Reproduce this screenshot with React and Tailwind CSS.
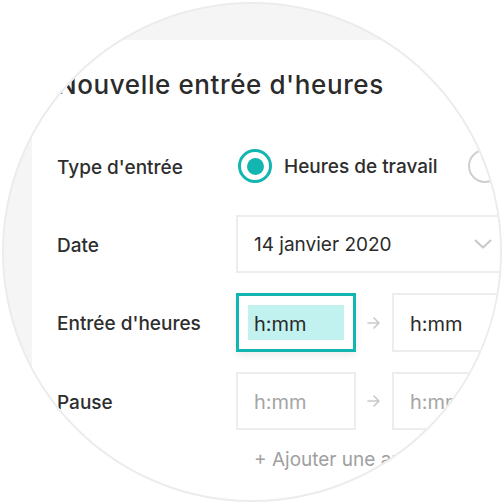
const Arrow = () => (
  <svg width="14" height="12" viewBox="0 0 14 12" className="mx-auto">
    <path d="M1 6h11M7 1l5 5-5 5" fill="none" stroke="#c9c9c9" strokeWidth="1.6" strokeLinecap="round" strokeLinejoin="round" />
  </svg>
);

const TimeBox = ({ value, muted, focused }) => {
  if (focused) {
    return (
      <div className="w-[120px] h-[59px] border-[3px] border-[#13b5b1] bg-white p-[9px] shadow-[0_3px_8px_rgba(0,0,0,0.08)] shrink-0">
        <div className="h-full bg-[#c2f2ef] pl-[6px] pt-[2px] flex items-center text-[20px] text-[#2b2b2b]">
          {value}
        </div>
      </div>
    );
  }
  return (
    <div
      className={
        "w-[120px] h-full border-2 border-[#ededed] bg-white pl-[16px] pt-[2px] flex items-center text-[20px] shrink-0 " +
        (muted ? "text-[#a5a5a5]" : "text-[#2b2b2b]")
      }
    >
      {value}
    </div>
  );
};

export default function App() {
  return (
    <div
      className="w-[504px] h-[504px] bg-white flex items-center justify-center"
      style={{ fontFamily: "Inter, 'Noto Sans', sans-serif" }}
    >
      <div className="w-[500px] h-[500px] rounded-full overflow-hidden border-2 border-[#ececec] bg-[#f5f5f5] shrink-0">
        <div className="ml-[28px] mt-[36px] w-[620px] h-[620px] bg-white pl-[25px] pt-[28px]">
          <h1 className="text-[26px] leading-[34px] font-medium text-[#2b2b2b] tracking-[0.6px] whitespace-nowrap">
            Nouvelle entrée d'heures
          </h1>

          <div className="mt-[35px] flex flex-col text-[19px] text-[#2e2e2e]">
            {/* Type */}
            <div className="flex items-center h-[58px]">
              <div className="w-[179px] pt-[4px] font-medium shrink-0">Type d'entrée</div>
              <div className="flex items-center">
                <div className="ml-[2px] w-[34px] h-[34px] rounded-full border-[3px] border-[#13b5b1] flex items-center justify-center shrink-0">
                  <div className="w-[17px] h-[17px] rounded-full bg-[#13b5b1]" />
                </div>
                <span className="ml-[12px] pt-[2px] font-medium whitespace-nowrap">Heures de travail</span>
                <div className="ml-[30px] w-[34px] h-[34px] rounded-full border-2 border-[#cfcfcf] shrink-0" />
              </div>
            </div>

            {/* Date */}
            <div className="flex items-center h-[58px] mt-[20px]">
              <div className="w-[179px] pt-[4px] font-medium shrink-0">Date</div>
              <div className="w-[290px] h-full border-2 border-[#ededed] flex items-center justify-between pl-[16px] pr-[32px] shrink-0">
                <span className="pt-[2px] text-[19px] text-[#2b2b2b] whitespace-nowrap">14 janvier 2020</span>
                <svg width="18" height="10" viewBox="0 0 18 10">
                  <path d="M1.5 1.5L9 8.5l7.5-7" fill="none" stroke="#c8c8c8" strokeWidth="2" strokeLinecap="round" strokeLinejoin="round" />
                </svg>
              </div>
            </div>

            {/* Entrée */}
            <div className="flex items-center h-[59px] mt-[20px]">
              <div className="w-[179px] pt-[4px] font-medium shrink-0">Entrée d'heures</div>
              <TimeBox value="h:mm" focused />
              <div className="w-[36px] shrink-0 flex">
                <Arrow />
              </div>
              <TimeBox value="h:mm" />
            </div>

            {/* Pause */}
            <div className="flex items-center h-[58px] mt-[20px]">
              <div className="w-[179px] pt-[4px] font-medium shrink-0">Pause</div>
              <TimeBox value="h:mm" muted />
              <div className="w-[36px] shrink-0 flex">
                <Arrow />
              </div>
              <TimeBox value="h:mm" muted />
            </div>

            <div className="flex items-center h-[20px] mt-[20px]">
              <div className="w-[179px] shrink-0" />
              <span className="ml-[18px] text-[#a0a0a0] whitespace-nowrap">+ Ajouter une autre pause</span>
            </div>

            <div className="flex items-center h-[58px] mt-[30px]">
              <div className="w-[179px] shrink-0" />
              <div className="w-[120px] h-full border-2 border-[#ededed]" />
              <div className="w-[36px] shrink-0" />
              <div className="w-[120px] h-full border-2 border-[#ededed]" />
            </div>
          </div>
        </div>
      </div>
    </div>
  );
}
